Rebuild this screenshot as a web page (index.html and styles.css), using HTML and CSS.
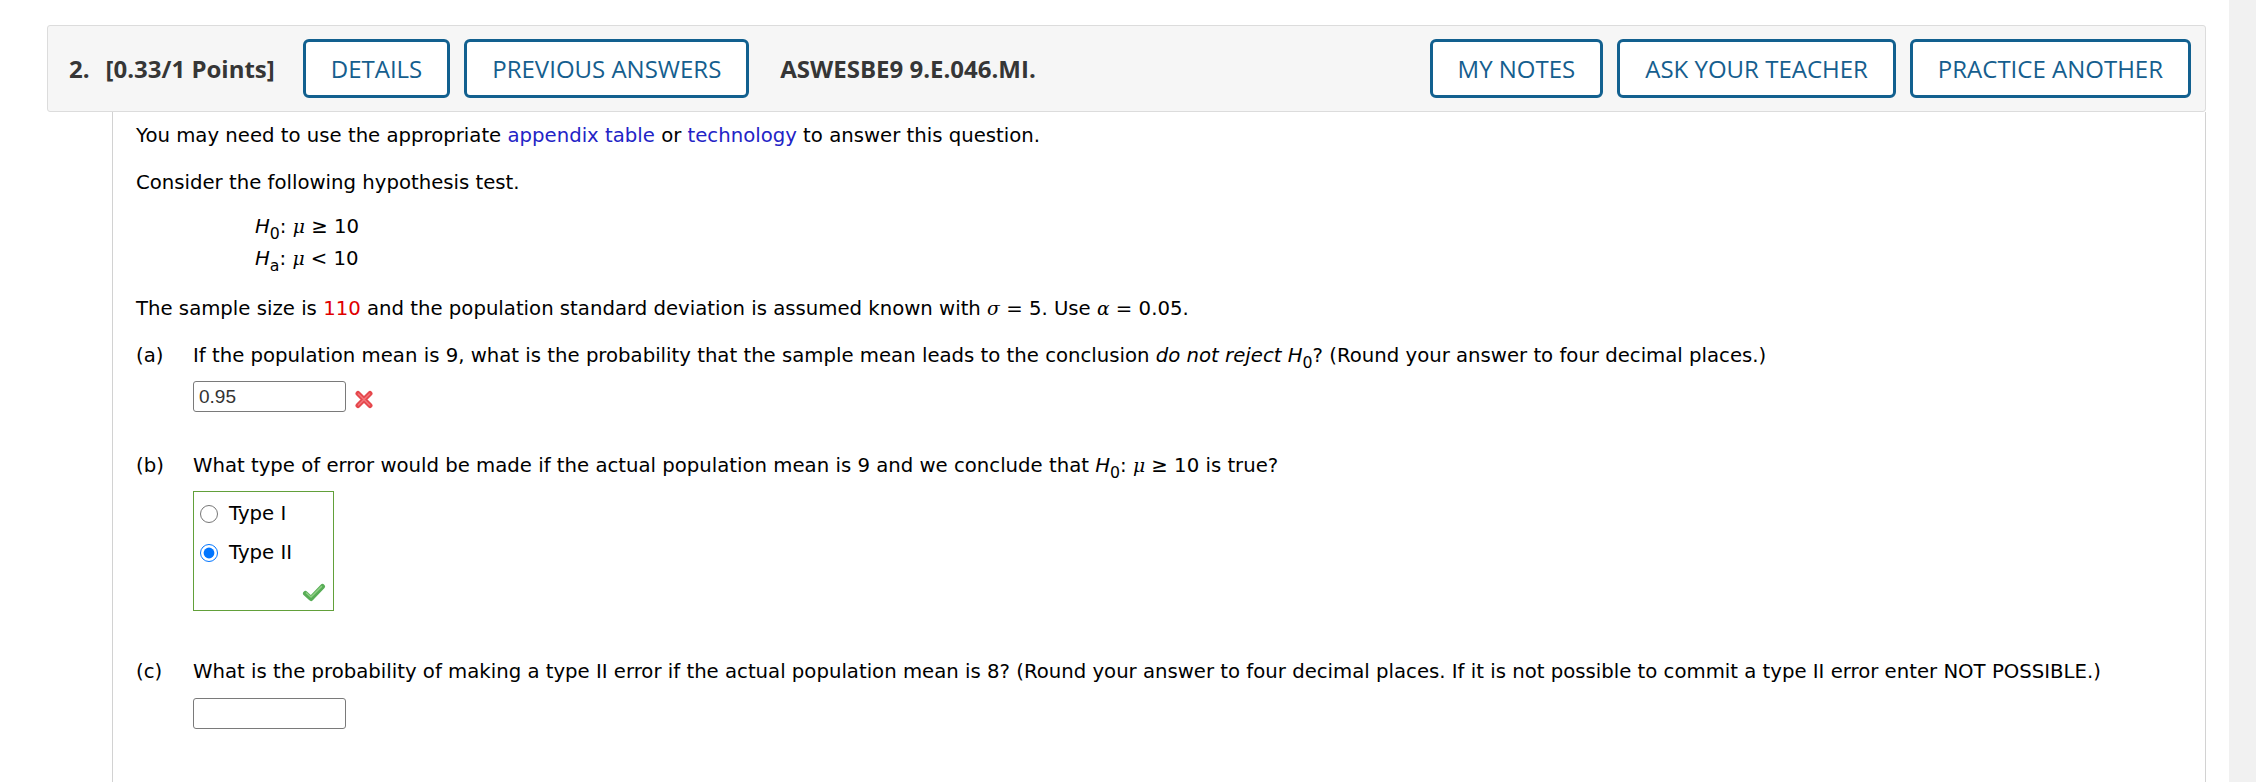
FILE: index.html
```html
<!DOCTYPE html>
<html lang="en">
<head>
<meta charset="utf-8">
<title>Question 2</title>
<link rel="stylesheet" href="styles.css">
</head>
<body>
<div class="page">
  <div class="main">
    <div class="qhead">
      <div class="qtitle"><span class="qnum">2.</span><span>[0.33/1 Points]</span></div>
      <button class="btn btn-first">DETAILS</button>
      <button class="btn">PREVIOUS ANSWERS</button>
      <div class="qcode">ASWESBE9 9.E.046.MI.</div>
      <div class="spacer"></div>
      <button class="btn">MY NOTES</button>
      <button class="btn">ASK YOUR TEACHER</button>
      <button class="btn">PRACTICE ANOTHER</button>
    </div>
    <div class="qbody">
      <p class="line">You may need to use the appropriate <a class="lnk" href="#">appendix table</a> or <a class="lnk" href="#">technology</a> to answer this question.</p>
      <p class="line gap">Consider the following hypothesis test.</p>
      <div class="hyp">
        <div class="hline"><span class="mv">H</span><sub class="sb">0</sub>: <span class="gk">μ</span> ≥ 10</div>
        <div class="hline"><span class="mv">H</span><sub class="sb">a</sub>: <span class="gk">μ</span> &lt; 10</div>
      </div>
      <p class="line gap">The sample size is <span class="red">110</span> and the population standard deviation is assumed known with <span class="gk">σ</span> = 5. Use <span class="gk">α</span> = 0.05.</p>

      <div class="part part-a">
        <div class="plabel">(a)</div>
        <div class="pbody">
          <p class="line">If the population mean is 9, what is the probability that the sample mean leads to the conclusion <i>do not reject</i> <span class="mv">H</span><sub class="sb">0</sub>? (Round your answer to four decimal places.)</p>
          <div class="answer">
            <input class="ans" type="text" value="0.95">
            <svg class="xmark" width="20" height="19" viewBox="0 0 20 19" aria-hidden="true">
              <path d="M4 3.5 L16 15.5 M16 3.5 L4 15.5" stroke="#e5474c" stroke-width="5" stroke-linecap="round" fill="none"/>
              <path d="M4.5 4 L15.5 15 M15.5 4 L4.5 15" stroke="#f37479" stroke-width="1.6" stroke-linecap="round" fill="none"/>
            </svg>
          </div>
        </div>
      </div>

      <div class="part part-b">
        <div class="plabel">(b)</div>
        <div class="pbody">
          <p class="line">What type of error would be made if the actual population mean is 9 and we conclude that <span class="mv">H</span><sub class="sb">0</sub>: <span class="gk">μ</span> ≥ 10 is true?</p>
          <div class="choices">
            <label class="choice"><input class="radio" type="radio" name="err"><span>Type I</span></label>
            <label class="choice choice-2"><input class="radio" type="radio" name="err" checked><span>Type II</span></label>
            <div class="checkrow">
              <svg class="check" width="24" height="19" viewBox="0 0 24 19" aria-hidden="true">
                <path d="M3.5 10.5 L9 15.5 L20.5 3.5" stroke="#58ad56" stroke-width="5" stroke-linecap="round" stroke-linejoin="round" fill="none"/>
                <path d="M4.5 10 L9 14 L19.5 3.5" stroke="#8fcf85" stroke-width="1.5" stroke-linecap="round" fill="none"/>
              </svg>
            </div>
          </div>
        </div>
      </div>

      <div class="part part-c">
        <div class="plabel">(c)</div>
        <div class="pbody">
          <p class="line">What is the probability of making a type II error if the actual population mean is 8? (Round your answer to four decimal places. If it is not possible to commit a type II error enter NOT POSSIBLE.)</p>
          <div class="answer answer-c">
            <input class="ans" type="text" value="">
          </div>
        </div>
      </div>
    </div>
  </div>
  <div class="scrolltrack"></div>
</div>
</body>
</html>
```

FILE: styles.css
```css
html, body {
  margin: 0;
  padding: 0;
  background: #ffffff;
}

.page {
  display: flex;
  height: 782px;
  overflow: hidden;
}

.main {
  flex: 1;
  display: flex;
  flex-direction: column;
  padding: 25px 23px 0 47px;
  min-width: 0;
}

.scrolltrack {
  width: 27px;
  background: #f1f1f1;
}

/* ---------- header ---------- */
.qhead {
  display: flex;
  align-items: center;
  height: 87px;
  box-sizing: border-box;
  border: 1px solid #dcdcdc;
  border-radius: 3px;
  background: #f6f6f6;
  padding: 0 14px 0 21px;
  font-family: "Open Sans", "Liberation Sans", sans-serif;
  font-size: 24px;
}

.qtitle {
  font-weight: 700;
  color: #363636;
  white-space: nowrap;
}

.qnum {
  margin-right: 16px;
}

.qcode {
  font-weight: 700;
  color: #363636;
  margin-left: 31px;
  white-space: nowrap;
}

.spacer {
  flex: 1;
}

.btn {
  height: 59px;
  box-sizing: border-box;
  border: 3px solid #12608f;
  border-radius: 6px;
  background: #ffffff;
  color: #155e8e;
  font-family: "Open Sans", "Liberation Sans", sans-serif;
  font-size: 24px;
  line-height: 53px;
  padding: 0 25px;
  margin: 0 0 0 14px;
  white-space: nowrap;
  cursor: pointer;
}

.btn-first {
  margin-left: 28px;
}

/* ---------- body ---------- */
.qbody {
  flex: 1;
  margin-left: 65px;
  border-left: 1px solid #d2d2d2;
  border-right: 1px solid #d2d2d2;
  padding: 10px 0 0 23px;
  font-family: "DejaVu Sans", Verdana, sans-serif;
  font-size: 19.7px;
  color: #000000;
}

.line {
  margin: 0;
  line-height: 27px;
  white-space: nowrap;
}

.gap {
  margin-top: 20px;
}

.lnk {
  color: #2323c6;
  text-decoration: none;
}

.red {
  color: #e00000;
}

.mv {
  font-style: italic;
}

.gk {
  font-family: "DejaVu Serif", "Liberation Serif", serif;
  font-style: italic;
  font-size: 0.95em;
}

.sb {
  font-size: 0.8em;
  line-height: 0;
  vertical-align: -6px;
}

.hyp {
  margin: 15px 0 0 119px;
}

.hline {
  line-height: 32px;
  white-space: nowrap;
}

.part {
  display: grid;
  grid-template-columns: 57px 1fr;
}

.part-a {
  margin-top: 20px;
}

.part-b {
  margin-top: 40px;
}

.part-c {
  margin-top: 47px;
}

.plabel {
  line-height: 27px;
}

.answer {
  display: flex;
  align-items: center;
  margin-top: 12px;
}

.answer-c {
  margin-top: 13px;
}

.ans {
  width: 153px;
  height: 31px;
  box-sizing: border-box;
  border: 1px solid #7a7a7a;
  border-radius: 3px;
  padding: 0 5px;
  margin: 0;
  font-family: "Liberation Sans", Arial, sans-serif;
  font-size: 19px;
  color: #333333;
  background: #ffffff;
}

.xmark {
  margin: 6px 0 0 8px;
}

.choices {
  margin-top: 12px;
  width: 141px;
  box-sizing: border-box;
  border: 1px solid #62a03a;
  padding: 8px 8px 8px 6px;
}

.choice {
  display: flex;
  align-items: center;
  gap: 11px;
  height: 27px;
  line-height: 27px;
}

.choice-2 {
  margin-top: 12px;
}

.radio {
  width: 18px;
  height: 18px;
  margin: 0;
  accent-color: #0075ff;
}

.checkrow {
  display: flex;
  justify-content: flex-end;
  margin-top: 17px;
  height: 19px;
}

.check {
  display: block;
  margin-right: -1px;
}
```
